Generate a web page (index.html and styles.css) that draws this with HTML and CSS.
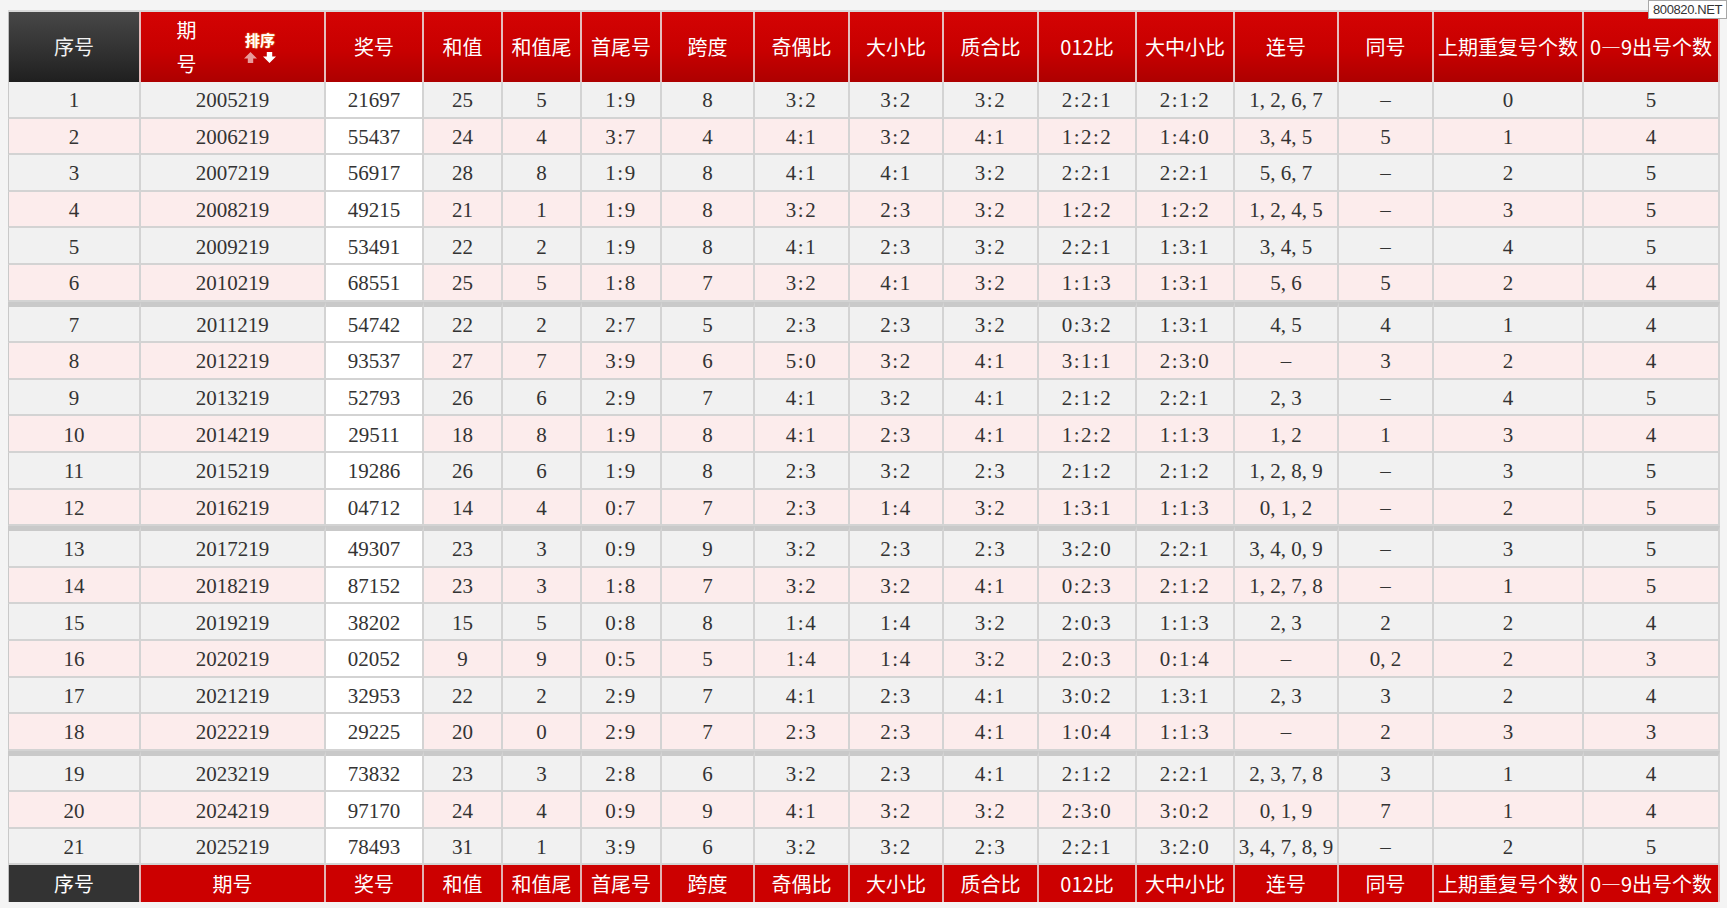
FILE: index.html
```html
<!DOCTYPE html>
<html lang="zh-CN">
<head>
<meta charset="utf-8">
<title>开奖号码统计</title>
<link rel="stylesheet" href="styles.css">
</head>
<body>
<div class="page">
<table class="grid">
<colgroup>
<col class="c1"><col class="c2"><col class="c3"><col class="c4"><col class="c5"><col class="c6"><col class="c7"><col class="c8"><col class="c9"><col class="c10"><col class="c11"><col class="c12"><col class="c13"><col class="c14"><col class="c15"><col class="c16">
</colgroup>
<thead>
<tr>
<th class="dark">序号</th>
<th class="qh"><div class="qh-in"><span class="qh-t">期<br>号</span><span class="sort"><b>排序</b><span class="arrows"><svg width="13" height="11" viewBox="0 0 12 10"><polygon points="6,0 12,6 8.5,6 8.5,10 3.5,10 3.5,6 0,6" fill="#e79a9a"/></svg><svg width="13" height="11" viewBox="0 0 12 10"><polygon points="3.5,0 8.5,0 8.5,4 12,4 6,10 0,4 3.5,4" fill="#ffffff"/></svg></span></span></div></th>
<th>奖号</th><th>和值</th><th>和值尾</th><th>首尾号</th><th>跨度</th><th>奇偶比</th><th>大小比</th><th>质合比</th><th>012比</th><th>大中小比</th><th>连号</th><th>同号</th><th>上期重复号个数</th><th>0—9出号个数</th>
</tr>
</thead>
<tbody>
<tr><td>1</td><td>2005219</td><td class="prize">21697</td><td>25</td><td>5</td><td class="r">1:9</td><td>8</td><td class="r">3:2</td><td class="r">3:2</td><td class="r">3:2</td><td class="r">2:2:1</td><td class="r">2:1:2</td><td>1, 2, 6, 7</td><td>–</td><td>0</td><td>5</td></tr>
<tr><td>2</td><td>2006219</td><td class="prize">55437</td><td>24</td><td>4</td><td class="r">3:7</td><td>4</td><td class="r">4:1</td><td class="r">3:2</td><td class="r">4:1</td><td class="r">1:2:2</td><td class="r">1:4:0</td><td>3, 4, 5</td><td>5</td><td>1</td><td>4</td></tr>
<tr><td>3</td><td>2007219</td><td class="prize">56917</td><td>28</td><td>8</td><td class="r">1:9</td><td>8</td><td class="r">4:1</td><td class="r">4:1</td><td class="r">3:2</td><td class="r">2:2:1</td><td class="r">2:2:1</td><td>5, 6, 7</td><td>–</td><td>2</td><td>5</td></tr>
<tr><td>4</td><td>2008219</td><td class="prize">49215</td><td>21</td><td>1</td><td class="r">1:9</td><td>8</td><td class="r">3:2</td><td class="r">2:3</td><td class="r">3:2</td><td class="r">1:2:2</td><td class="r">1:2:2</td><td>1, 2, 4, 5</td><td>–</td><td>3</td><td>5</td></tr>
<tr><td>5</td><td>2009219</td><td class="prize">53491</td><td>22</td><td>2</td><td class="r">1:9</td><td>8</td><td class="r">4:1</td><td class="r">2:3</td><td class="r">3:2</td><td class="r">2:2:1</td><td class="r">1:3:1</td><td>3, 4, 5</td><td>–</td><td>4</td><td>5</td></tr>
<tr><td>6</td><td>2010219</td><td class="prize">68551</td><td>25</td><td>5</td><td class="r">1:8</td><td>7</td><td class="r">3:2</td><td class="r">4:1</td><td class="r">3:2</td><td class="r">1:1:3</td><td class="r">1:3:1</td><td>5, 6</td><td>5</td><td>2</td><td>4</td></tr>
<tr class="gap"><td>7</td><td>2011219</td><td class="prize">54742</td><td>22</td><td>2</td><td class="r">2:7</td><td>5</td><td class="r">2:3</td><td class="r">2:3</td><td class="r">3:2</td><td class="r">0:3:2</td><td class="r">1:3:1</td><td>4, 5</td><td>4</td><td>1</td><td>4</td></tr>
<tr><td>8</td><td>2012219</td><td class="prize">93537</td><td>27</td><td>7</td><td class="r">3:9</td><td>6</td><td class="r">5:0</td><td class="r">3:2</td><td class="r">4:1</td><td class="r">3:1:1</td><td class="r">2:3:0</td><td>–</td><td>3</td><td>2</td><td>4</td></tr>
<tr><td>9</td><td>2013219</td><td class="prize">52793</td><td>26</td><td>6</td><td class="r">2:9</td><td>7</td><td class="r">4:1</td><td class="r">3:2</td><td class="r">4:1</td><td class="r">2:1:2</td><td class="r">2:2:1</td><td>2, 3</td><td>–</td><td>4</td><td>5</td></tr>
<tr><td>10</td><td>2014219</td><td class="prize">29511</td><td>18</td><td>8</td><td class="r">1:9</td><td>8</td><td class="r">4:1</td><td class="r">2:3</td><td class="r">4:1</td><td class="r">1:2:2</td><td class="r">1:1:3</td><td>1, 2</td><td>1</td><td>3</td><td>4</td></tr>
<tr><td>11</td><td>2015219</td><td class="prize">19286</td><td>26</td><td>6</td><td class="r">1:9</td><td>8</td><td class="r">2:3</td><td class="r">3:2</td><td class="r">2:3</td><td class="r">2:1:2</td><td class="r">2:1:2</td><td>1, 2, 8, 9</td><td>–</td><td>3</td><td>5</td></tr>
<tr><td>12</td><td>2016219</td><td class="prize">04712</td><td>14</td><td>4</td><td class="r">0:7</td><td>7</td><td class="r">2:3</td><td class="r">1:4</td><td class="r">3:2</td><td class="r">1:3:1</td><td class="r">1:1:3</td><td>0, 1, 2</td><td>–</td><td>2</td><td>5</td></tr>
<tr class="gap"><td>13</td><td>2017219</td><td class="prize">49307</td><td>23</td><td>3</td><td class="r">0:9</td><td>9</td><td class="r">3:2</td><td class="r">2:3</td><td class="r">2:3</td><td class="r">3:2:0</td><td class="r">2:2:1</td><td>3, 4, 0, 9</td><td>–</td><td>3</td><td>5</td></tr>
<tr><td>14</td><td>2018219</td><td class="prize">87152</td><td>23</td><td>3</td><td class="r">1:8</td><td>7</td><td class="r">3:2</td><td class="r">3:2</td><td class="r">4:1</td><td class="r">0:2:3</td><td class="r">2:1:2</td><td>1, 2, 7, 8</td><td>–</td><td>1</td><td>5</td></tr>
<tr><td>15</td><td>2019219</td><td class="prize">38202</td><td>15</td><td>5</td><td class="r">0:8</td><td>8</td><td class="r">1:4</td><td class="r">1:4</td><td class="r">3:2</td><td class="r">2:0:3</td><td class="r">1:1:3</td><td>2, 3</td><td>2</td><td>2</td><td>4</td></tr>
<tr><td>16</td><td>2020219</td><td class="prize">02052</td><td>9</td><td>9</td><td class="r">0:5</td><td>5</td><td class="r">1:4</td><td class="r">1:4</td><td class="r">3:2</td><td class="r">2:0:3</td><td class="r">0:1:4</td><td>–</td><td>0, 2</td><td>2</td><td>3</td></tr>
<tr><td>17</td><td>2021219</td><td class="prize">32953</td><td>22</td><td>2</td><td class="r">2:9</td><td>7</td><td class="r">4:1</td><td class="r">2:3</td><td class="r">4:1</td><td class="r">3:0:2</td><td class="r">1:3:1</td><td>2, 3</td><td>3</td><td>2</td><td>4</td></tr>
<tr><td>18</td><td>2022219</td><td class="prize">29225</td><td>20</td><td>0</td><td class="r">2:9</td><td>7</td><td class="r">2:3</td><td class="r">2:3</td><td class="r">4:1</td><td class="r">1:0:4</td><td class="r">1:1:3</td><td>–</td><td>2</td><td>3</td><td>3</td></tr>
<tr class="gap"><td>19</td><td>2023219</td><td class="prize">73832</td><td>23</td><td>3</td><td class="r">2:8</td><td>6</td><td class="r">3:2</td><td class="r">2:3</td><td class="r">4:1</td><td class="r">2:1:2</td><td class="r">2:2:1</td><td>2, 3, 7, 8</td><td>3</td><td>1</td><td>4</td></tr>
<tr><td>20</td><td>2024219</td><td class="prize">97170</td><td>24</td><td>4</td><td class="r">0:9</td><td>9</td><td class="r">4:1</td><td class="r">3:2</td><td class="r">3:2</td><td class="r">2:3:0</td><td class="r">3:0:2</td><td>0, 1, 9</td><td>7</td><td>1</td><td>4</td></tr>
<tr><td>21</td><td>2025219</td><td class="prize">78493</td><td>31</td><td>1</td><td class="r">3:9</td><td>6</td><td class="r">3:2</td><td class="r">3:2</td><td class="r">2:3</td><td class="r">2:2:1</td><td class="r">3:2:0</td><td>3, 4, 7, 8, 9</td><td>–</td><td>2</td><td>5</td></tr>
</tbody>
<tfoot>
<tr>
<td class="dark">序号</td><td>期号</td><td>奖号</td><td>和值</td><td>和值尾</td><td>首尾号</td><td>跨度</td><td>奇偶比</td><td>大小比</td><td>质合比</td><td>012比</td><td>大中小比</td><td>连号</td><td>同号</td><td>上期重复号个数</td><td>0—9出号个数</td>
</tr>
</tfoot>
</table>
<div class="mark">800820.NET</div>
</div>
</body>
</html>
```

FILE: styles.css
```css
* {
  box-sizing: border-box;
}

body {
  margin: 0;
  background: #f4f4f4;
  color: #333333;
  font-family: "Liberation Serif", "Noto Sans CJK SC", serif;
}

.page {
  position: relative;
  height: 908px;
  padding: 10px 0 0 8px;
  overflow: hidden;
}

.grid {
  border-collapse: separate;
  border-spacing: 0;
  table-layout: fixed;
  width: 1712px;
  border-top: 2px solid #d9d9d9;
}

.c1 { width: 133px; }
.c2 { width: 185px; }
.c3 { width: 98px; }
.c4 { width: 79px; }
.c5 { width: 79px; }
.c6 { width: 80px; }
.c7 { width: 93px; }
.c8 { width: 95px; }
.c9 { width: 94px; }
.c10 { width: 95px; }
.c11 { width: 98px; }
.c12 { width: 98px; }
.c13 { width: 104px; }
.c14 { width: 95px; }
.c15 { width: 150px; }
.c16 { width: 136px; }

.grid th,
.grid td {
  padding: 0;
  text-align: center;
  vertical-align: middle;
  white-space: nowrap;
  overflow: hidden;
}

.grid thead th {
  height: 70px;
  font-family: "Noto Sans CJK SC", sans-serif;
  font-size: 20px;
  font-weight: 400;
  line-height: 1.2;
  color: #ffffff;
  background: linear-gradient(to bottom, #d40303 0%, #c80000 55%, #ad0000 100%);
  border-right: 2px solid #e6bcbc;
}

.grid thead th.dark {
  background: linear-gradient(to bottom, #474747 0%, #303030 60%, #1f1f1f 100%);
  color: #f2f2f2;
  border-left: 1px solid #bdbdbd;
}

.qh-in {
  display: flex;
  align-items: center;
  padding-left: 35px;
  gap: 47px;
}

.qh-t {
  display: block;
  line-height: 34px;
  width: 21px;
}

.sort {
  display: flex;
  flex-direction: column;
  align-items: center;
  gap: 5px;
}

.sort b {
  display: block;
  font-size: 15px;
  line-height: 15px;
  font-weight: 700;
  color: #ffffff;
  text-shadow: 0 0 2px #f29a3a, 0 0 1px #f29a3a;
}

.arrows {
  display: flex;
  gap: 6px;
}

.arrows svg {
  display: block;
}

.grid tbody td {
  height: 36.6px;
  padding-top: 3px;
  font-size: 21px;
  line-height: 1;
  background: #f1f1f1;
  border-right: 2px solid #d3d3d3;
  border-bottom: 2px solid #d3d3d3;
}

.grid tbody td:first-child {
  border-left: 1px solid #c9c9c9;
}

.grid tbody tr:nth-child(even) td {
  background: #fcecec;
}

.grid tbody td.prize,
.grid tbody tr:nth-child(even) td.prize {
  background: #ffffff;
}

.grid tbody tr.gap td {
  height: 41.6px;
  border-top: 5px solid #c9c9c9;
}

.grid tbody td.r {
  letter-spacing: 1.5px;
}

.grid tfoot td {
  height: 37px;
  font-family: "Noto Sans CJK SC", sans-serif;
  font-size: 20px;
  line-height: 1.2;
  color: #ffffff;
  background: #cc0000;
  border-right: 2px solid #e3b3b3;
}

.grid tfoot td.dark {
  background: #333333;
  border-left: 1px solid #bdbdbd;
}

.mark {
  position: absolute;
  top: 0;
  right: 0;
  width: 79px;
  height: 19px;
  background: #ffffff;
  border: 1px solid #a8a8a8;
  font-family: "Liberation Sans", sans-serif;
  font-size: 13px;
  letter-spacing: -0.4px;
  line-height: 17px;
  text-align: center;
  color: #333333;
}
```
